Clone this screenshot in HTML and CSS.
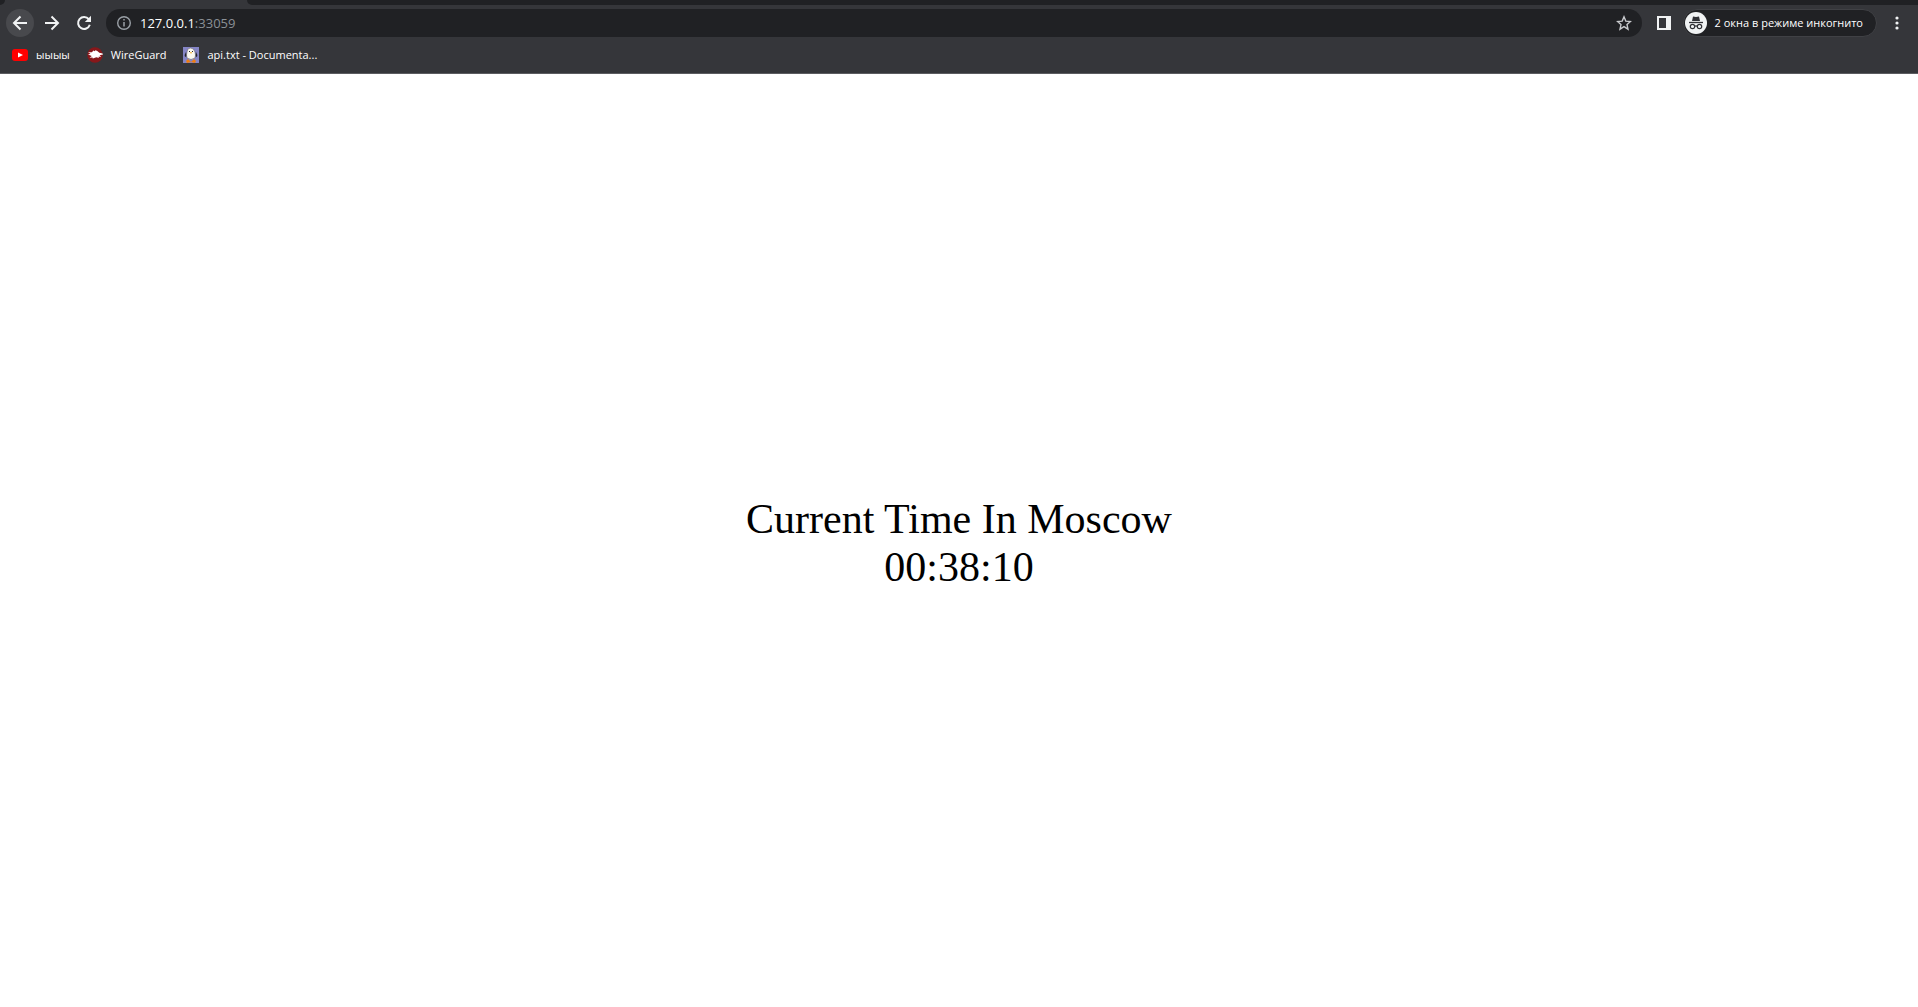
FILE: index.html
```html
<!DOCTYPE html>
<html lang="en">
<head>
<meta charset="utf-8">
<title>Current Time In Moscow</title>
<link rel="stylesheet" href="styles.css">
</head>
<body>
<header class="browser">
  <div class="tabstrip"><div class="strip-start"></div><div class="active-tab"></div><div class="strip-rest"></div></div>
  <div class="toolbar">
    <button class="nav nav-active" aria-label="Back"><svg viewBox="0 0 16 16" width="16" height="16"><path d="M15 8H2M8.500 1.500 2 8l6.500 6.500" fill="none" stroke="#f1f3f4" stroke-width="2"/></svg></button>
    <button class="nav" aria-label="Forward"><svg viewBox="0 0 16 16" width="16" height="16"><path d="M1 8h13M7.500 1.500 14 8l-6.500 6.500" fill="none" stroke="#f1f3f4" stroke-width="2"/></svg></button>
    <button class="nav" aria-label="Reload"><svg viewBox="0 0 16 16" width="16" height="16"><path d="M13.800 9.800A6 6 0 1 1 12.800 4.200" fill="none" stroke="#f1f3f4" stroke-width="2"/><path d="M15 .8V7H8.800z" fill="#f1f3f4"/></svg></button>
    <div class="omnibox">
      <svg class="info" viewBox="0 0 14 14" width="14" height="14"><circle cx="7" cy="7" r="6.300" fill="none" stroke="#9aa0a6" stroke-width="1.400"/><path d="M7 3v1.600M7 6v4.500" stroke="#9aa0a6" stroke-width="1.500"/></svg>
      <span class="url">127.0.0.1<span class="port">:33059</span></span>
      <button class="star" aria-label="Bookmark this page"><svg viewBox="0 0 16 16" width="16" height="16"><path d="m8 1.800 1.800 4.300 4.700.4L11 9.600l1 4.600-4-2.500-4 2.500 1-4.600L1.500 6.500l4.700-.4z" fill="none" stroke="#c8cacd" stroke-width="1.400"/></svg></button>
    </div>
    <button class="panel" aria-label="Side panel"><svg viewBox="0 0 14 14" width="14" height="14"><path fill="#f1f3f4" fill-rule="evenodd" d="M0 0h14v14H0zM2 2v10h7V2z"/></svg></button>
    <button class="incognito">
      <svg viewBox="0 0 22 22" width="22" height="22"><circle cx="11" cy="11" r="11" fill="#f1f3f4"/><path d="m7 9 1-4.500q3 .8 6 0L15 9z" fill="#303136"/><path d="M4 10.500h14" stroke="#303136" stroke-width="1.300"/><g fill="none" stroke="#303136" stroke-width="1.200"><circle cx="7.500" cy="14.500" r="2.200"/><circle cx="14.500" cy="14.500" r="2.200"/><path d="M9.700 14.300q1.300-.8 2.600 0"/></g></svg>
      <span lang="ru">2 окна в режиме инкогнито</span>
    </button>
    <button class="menu" aria-label="Menu"><svg viewBox="0 0 4 14" width="4" height="14"><g fill="#f1f3f4"><circle cx="2" cy="2" r="1.600"/><circle cx="2" cy="7" r="1.600"/><circle cx="2" cy="12" r="1.600"/></g></svg></button>
  </div>
  <nav class="bookmarks" aria-label="Bookmarks">
    <a class="bookmark" href="#"><svg viewBox="0 0 16 16" width="16" height="16"><rect y="2" width="16" height="12" rx="3" fill="#f00"/><path d="m6 5.500 5 2.500-5 2.500z" fill="#fff"/></svg><span>ыыыы</span></a>
    <a class="bookmark" href="#"><svg viewBox="0 0 16 16" width="16" height="16"><circle cx="8" cy="8" r="7.700" fill="#88171a"/><path d="m1 5.200 4 .1 1.300-1.800 1.200.8 1-1 1.800.6 2 1.800 3.300.7.4 1.200-3.400.7 1.600 1.500-2.800-.1.600 1.300-2.700-.7-3.500 1.200-.3-1-3 .2 2.300-1.800L1 7.600l2.500-.8z" fill="#fff"/></svg><span>WireGuard</span></a>
    <a class="bookmark" href="#"><svg viewBox="0 0 16 16" width="16" height="16"><path fill="#8585c5" d="M0 0h16v16H0z"/><path d="M3 5Q1 8 2 10l2-1zM13 5q2 3 1 5l-2-1z" fill="#25252d"/><path d="M4 5Q4 1 7.500 1T12 5q1 3 0 6-4 3-8 0-1-3 0-6" fill="#faf8f0" stroke="#5b5969" stroke-width=".6"/><path d="M6 4h1v1H6zM9 4h1v1H9z" fill="#222"/><path d="m7 5 2 .3L8 7z" fill="#f2a31b"/><path d="m5 12 3 3-4 1-1-2zM11 12l2 2-1 2-4-1z" fill="#ef7e12"/></svg><span>api.txt - Documenta...</span></a>
  </nav>
</header>
<main class="page">
  <div>Current Time In Moscow</div>
  <time datetime="00:38:10">00:38:10</time>
</main>
</body>
</html>
```
FILE: styles.css
```css
* { box-sizing: border-box; }
body {
  margin: 0;
  min-height: 100vh;
  display: flex;
  flex-direction: column;
  background: #fff;
}
button {
  padding: 0;
  border: 0;
  background: none;
  font: inherit;
  color: inherit;
}
svg { display: block; flex: none; }
.browser {
  background: #35363a;
  border-bottom: 1px solid #5b5c60;
  color: #fff;
  font: 11px/16px "Open Sans", "Noto Sans", sans-serif;
}
.tabstrip { display: flex; height: 5px; }
.strip-start {
  width: 5px;
  background: #202124;
  border-bottom-right-radius: 5px;
}
.active-tab { width: 242px; }
.strip-rest {
  flex: 1;
  background: #202124;
  border-bottom-left-radius: 5px;
}
.toolbar {
  display: flex;
  align-items: center;
  height: 36px;
  padding: 0 19px 0 6px;
}
.nav {
  display: grid;
  place-items: center;
  width: 28px;
  height: 28px;
  margin-right: 4px;
  border-radius: 50%;
}
.nav-active { background: #48494d; }
.omnibox {
  flex: 1;
  display: flex;
  align-items: center;
  height: 28px;
  margin-left: 4px;
  padding: 0 10px 0 11px;
  border-radius: 14px;
  background: #202124;
}
.url {
  flex: 1;
  margin-left: 9px;
  font-size: 13px;
}
.port { color: #8b9096; }
.panel { margin-left: 15px; }
.incognito {
  display: flex;
  align-items: center;
  gap: 8px;
  height: 28px;
  margin-left: 12px;
  padding: 0 13px 0 1px;
  border: 1px solid #404145;
  border-radius: 14px;
  background: #202124;
}
.menu { margin-left: 18px; }
.bookmarks {
  display: flex;
  gap: 17px;
  height: 32px;
  padding: 6px 12px 0;
}
.bookmark {
  display: flex;
  gap: 8px;
  height: 16px;
  color: inherit;
  text-decoration: none;
}
.page {
  flex: 1;
  display: flex;
  flex-direction: column;
  align-items: center;
  justify-content: center;
  padding-top: 5px;
  color: #000;
  font: 42px/48px "Liberation Serif", "Times New Roman", serif;
}
```
